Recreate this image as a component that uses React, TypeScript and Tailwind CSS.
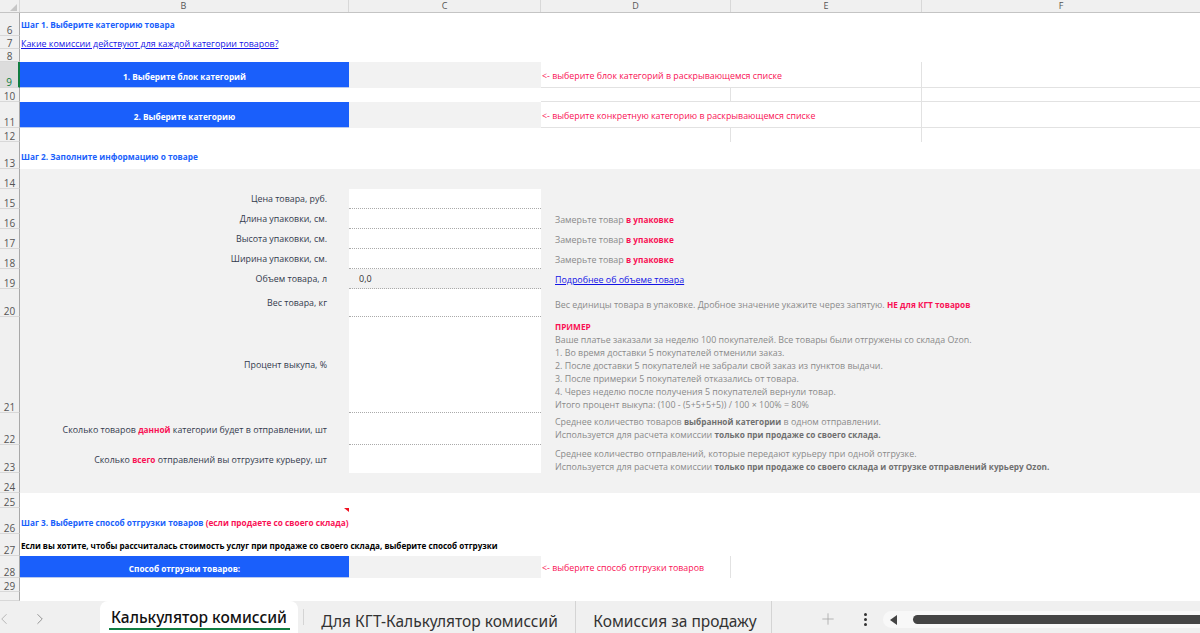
import type { ReactNode } from 'react';
import { ChevronLeft, ChevronRight, Plus } from 'lucide-react';

const FONT = 'font-["Open_Sans","Noto_Sans",sans-serif]';
const BLUE = 'text-[#1a5ffb]';
const PINK = 'text-[#f91155]';
const STRONG = 'font-bold text-[8.25px]';
const LINK = 'font-medium text-[8.9px] text-[#1414e6] underline whitespace-nowrap';

interface RowProps {
  n?: number;
  h: string;
  selected?: boolean;
  children?: ReactNode;
}

function Row({ n, h, selected, children }: RowProps) {
  return (
    <div className={`flex ${h}`}>
      <div
        className={`w-[20px] shrink-0 flex items-end justify-center border-b border-b-[#d8d8d8] border-r text-[10px] leading-[9px] ${
          selected
            ? 'bg-[#dcdcdc] border-r-2 border-r-[#107c41] text-[#107c41]'
            : 'bg-[#f0f0f0] border-r-[#a8a8a8] text-[#555]'
        }`}
      >
        {n}
      </div>
      {children}
    </div>
  );
}

function Blue({ children }: { children: ReactNode }) {
  return (
    <div className={`w-[329px] shrink-0 flex items-center justify-center pt-[3px] bg-[#1a5ffb] border-b border-[#b9c9ee] text-white ${STRONG}`}>
      {children}
    </div>
  );
}

function Hint({ children, className }: { children: ReactNode; className: string }) {
  return (
    <div className={`flex items-center pl-[1px] pt-[3px] text-[8.85px] whitespace-nowrap ${PINK} border-b border-[#e2e2e2] ${className}`}>
      {children}
    </div>
  );
}

function FormRow({
  n,
  h,
  label,
  input,
  last,
  children,
}: {
  n: number;
  h: string;
  label: ReactNode;
  input?: ReactNode;
  last?: boolean;
  children?: ReactNode;
}) {
  return (
    <Row n={n} h={h}>
      <div className="w-[329px] shrink-0 flex items-center justify-end pr-[22px] pt-[1px] text-[8.85px] text-[#333a4d] bg-[#f2f2f2]">
        <span>{label}</span>
      </div>
      <div
        className={`w-[192px] shrink-0 flex items-center pl-[10px] border-dotted border-[#aaa] text-[#333] ${
          input ? 'bg-[#f2f2f2]' : 'bg-white'
        } ${last ? '' : 'border-b'}`}
      >
        {input}
      </div>
      <div className="flex-1 flex flex-col justify-center pl-[14px] bg-[#f2f2f2] text-[#8a8a8a] text-[8.9px] leading-[13px] whitespace-nowrap">
        {children}
      </div>
    </Row>
  );
}

const measure = (
  <>
    Замерьте товар <b className={`${PINK} ${STRONG}`}>в упаковке</b>
  </>
);

function Tab({ children, active }: { children: ReactNode; active?: boolean }) {
  return active ? (
    <div className="h-full w-[198px] shrink-0 bg-white rounded-t-[8px] flex flex-col items-center pt-[5px]">
      <div className="w-[181px] pt-[1px] text-center text-[#111] text-[15.5px] leading-[20px] font-medium border-b-[2px] border-[#107c41] pb-[1px] whitespace-nowrap">
        {children}
      </div>
    </div>
  ) : (
    <div className="h-full flex items-end text-[#333] text-[15.5px] leading-[24px] whitespace-nowrap">{children}</div>
  );
}

export default function App() {
  return (
    <div className={`w-[1200px] h-[633px] overflow-hidden flex flex-col bg-white text-[9px] leading-[13px] ${FONT}`}>
      {/* column letters */}
      <div className="h-[13px] shrink-0 flex bg-[#f0f0f0] border-b border-[#c4c4c4] text-[9px] leading-[12px] text-[#555] text-center">
        <div className="w-[20px] shrink-0 flex justify-end items-end pr-[2px] pb-[1px] border-r border-[#d8d8d8]">
          <svg width="7" height="7" viewBox="0 0 7 7">
            <path d="M7 0V7H0Z" fill="#c6c6c6" />
          </svg>
        </div>
        <div className="w-[329px] shrink-0 border-r border-[#d8d8d8] pr-[1px]">B</div>
        <div className="w-[192px] shrink-0 border-r border-[#d8d8d8]">C</div>
        <div className="w-[190px] shrink-0 border-r border-[#d8d8d8]">D</div>
        <div className="w-[191px] shrink-0 border-r border-[#d8d8d8]">E</div>
        <div className="flex-1">F</div>
      </div>

      <div className="flex-1 min-h-0 flex flex-col">
        <Row n={6} h="h-[23px]">
          <div className={`pl-[1px] pb-[1px] flex items-center ${STRONG} ${BLUE}`}>Шаг 1. Выберите категорию товара</div>
        </Row>
        <Row n={7} h="h-[13px]">
          <div className={`pl-[1px] pt-[1px] ${LINK}`}>Какие комиссии действуют для каждой категории товаров?</div>
        </Row>
        <Row n={8} h="h-[13px]" />
        <Row n={9} h="h-[26px]" selected>
          <Blue>1. Выберите блок категорий</Blue>
          <div className="w-[192px] shrink-0 bg-[#f2f2f2]" />
          <Hint className="w-[381px] shrink-0 border-r">{'<- выберите блок категорий в раскрывающемся списке'}</Hint>
          <div className="flex-1 border-b border-[#e2e2e2]" />
        </Row>
        <Row n={10} h="h-[14px]">
          <div className="w-[521px] shrink-0" />
          <div className="w-[190px] shrink-0 border-r border-b border-[#e2e2e2]" />
          <div className="w-[191px] shrink-0 border-r border-b border-[#e2e2e2]" />
          <div className="flex-1 border-b border-[#e2e2e2]" />
        </Row>
        <Row n={11} h="h-[26px]">
          <Blue>2. Выберите категорию</Blue>
          <div className="w-[192px] shrink-0 bg-[#f2f2f2]" />
          <Hint className="w-[381px] shrink-0 border-r">{'<- выберите конкретную категорию в раскрывающемся списке'}</Hint>
          <div className="flex-1 border-b border-[#e2e2e2]" />
        </Row>
        <Row n={12} h="h-[14px]">
          <div className="w-[521px] shrink-0" />
          <div className="w-[190px] shrink-0 border-r border-[#e2e2e2]" />
          <div className="w-[191px] shrink-0 border-r border-[#e2e2e2]" />
        </Row>
        <Row n={13} h="h-[27px]">
          <div className={`pl-[1px] pt-[2px] flex items-center ${STRONG} ${BLUE}`}>Шаг 2. Заполните информацию о товаре</div>
        </Row>
        <Row n={14} h="h-[20px]">
          <div className="flex-1 bg-[#f2f2f2]" />
        </Row>

        <FormRow n={15} h="h-[20px]" label="Цена товара, руб." />
        <FormRow n={16} h="h-[20px]" label="Длина упаковки, см.">
          <div>{measure}</div>
        </FormRow>
        <FormRow n={17} h="h-[20px]" label="Высота упаковки, см.">
          <div>{measure}</div>
        </FormRow>
        <FormRow n={18} h="h-[20px]" label="Ширина упаковки, см.">
          <div>{measure}</div>
        </FormRow>
        <FormRow n={19} h="h-[20px]" label="Объем товара, л" input="0,0">
          <div className={LINK}>Подробнее об объеме товара</div>
        </FormRow>
        <FormRow n={20} h="h-[28px]" label="Вес товара, кг">
          <div className="pt-[2px]">
            Вес единицы товара в упаковке. Дробное значение укажите через запятую.{' '}
            <b className={`${PINK} ${STRONG}`}>НЕ для КГТ товаров</b>
          </div>
        </FormRow>
        <FormRow n={21} h="h-[96px]" label="Процент выкупа, %">
          <div className="pt-[1px]">
            <b className={`block ${PINK} ${STRONG}`}>ПРИМЕР</b>
            <div>Ваше платье заказали за неделю 100 покупателей. Все товары были отгружены со склада Ozon.</div>
            <div>1. Во время доставки 5 покупателей отменили заказ.</div>
            <div>2. После доставки 5 покупателей не забрали свой заказ из пунктов выдачи.</div>
            <div>3. После примерки 5 покупателей отказались от товара.</div>
            <div>4. Через неделю после получения 5 покупателей вернули товар.</div>
            <div>Итого процент выкупа: (100 - (5+5+5+5)) / 100 × 100% = 80%</div>
          </div>
        </FormRow>
        <FormRow
          n={22}
          h="h-[32px]"
          label={
            <>
              Сколько товаров <b className={`${PINK} ${STRONG}`}>данной</b> категории будет в отправлении, шт
            </>
          }
        >
          <div className="mb-[3px]">
            <div>
              Среднее количество товаров <b className={`text-[#6f6f6f] ${STRONG}`}>выбранной категории</b> в одном отправлении.
            </div>
            <div>
              Используется для расчета комиссии{' '}
              <b className={`text-[#6f6f6f] ${STRONG}`}>только при продаже со своего склада.</b>
            </div>
          </div>
        </FormRow>
        <FormRow
          n={23}
          h="h-[28px]"
          last
          label={
            <>
              Сколько <b className={`${PINK} ${STRONG}`}>всего</b> отправлений вы отгрузите курьеру, шт
            </>
          }
        >
          <div className="pt-[1px]">
            <div>Среднее количество отправлений, которые передают курьеру при одной отгрузке.</div>
            <div>
              Используется для расчета комиссии{' '}
              <b className={`text-[#6f6f6f] ${STRONG}`}>только при продаже со своего склада и отгрузке отправлений курьеру Ozon.</b>
            </div>
          </div>
        </FormRow>
        <Row n={24} h="h-[20px]">
          <div className="flex-1 bg-[#f2f2f2]" />
        </Row>
        <Row n={25} h="h-[15px]" />
        <Row n={26} h="h-[26px]">
          <div className={`relative w-[329px] shrink-0 flex items-center pl-[1px] pt-[2px] whitespace-nowrap ${STRONG}`}>
            <span className={BLUE}>Шаг 3. Выберите способ отгрузки товаров&nbsp;</span>
            <span className={PINK}>(если продаете со своего склада)</span>
            <svg className="absolute right-0 top-0" width="5" height="4" viewBox="0 0 5 4">
              <path d="M0 0H5V4Z" fill="#f01020" />
            </svg>
          </div>
        </Row>
        <Row n={27} h="h-[22px]">
          <div className="pl-[1px] pt-[1px] flex items-center whitespace-nowrap text-black font-bold text-[8.1px]">
            Если вы хотите, чтобы рассчиталась стоимость услуг при продаже со своего склада, выберите способ отгрузки
          </div>
        </Row>
        <Row n={28} h="h-[22px]">
          <Blue>Способ отгрузки товаров:</Blue>
          <div className="w-[192px] shrink-0 bg-[#f2f2f2]" />
          <div className={`w-[190px] shrink-0 flex items-center pl-[1px] pt-[3px] text-[8.85px] border-r border-[#e2e2e2] whitespace-nowrap ${PINK}`}>
            {'<- выберите способ отгрузки товаров'}
          </div>
        </Row>
        <Row n={29} h="h-[14px]" />
        <Row h="flex-1" />
      </div>

      {/* sheet tabs */}
      <div className="h-[32px] shrink-0 flex items-stretch bg-[#f0f0f0] font-['Noto_Sans',sans-serif]">
        <div className="w-[100px] shrink-0 flex items-center rounded-tr-[8px] text-[#8a8a8a] pt-[4px]">
          <ChevronLeft size={18} strokeWidth={1.2} className="ml-[-5px] text-[#b0b0b0]" />
          <ChevronRight size={18} strokeWidth={1.2} className="ml-[18px]" />
        </div>
        <Tab active>Калькулятор комиссий</Tab>
        <div className="flex-1 flex items-stretch bg-[#f0f0f0] rounded-tl-[8px] min-w-0">
          <div className="w-[6px] shrink-0 border-r border-[#d4d4d4] my-[8px]" />
          <div className="w-[272px] shrink-0 flex justify-center border-r border-[#d4d4d4]">
            <Tab>Для КГТ-Калькулятор комиссий</Tab>
          </div>
          <div className="w-[196px] shrink-0 flex justify-center pl-[3px] border-r border-[#d4d4d4]">
            <Tab>Комиссия за продажу</Tab>
          </div>
          <div className="w-[111px] shrink-0 flex items-center pt-[4px] pl-[47px] text-[#a0a0a0]">
            <Plus size={18} strokeWidth={1} />
            <div className="ml-[27px] flex flex-col gap-[2px]">
              <span className="w-[3px] h-[3px] rounded-full bg-[#333]" />
              <span className="w-[3px] h-[3px] rounded-full bg-[#333]" />
              <span className="w-[3px] h-[3px] rounded-full bg-[#333]" />
            </div>
          </div>
          <div className="flex-1 min-w-0 h-[17px] mt-[10px] flex items-center bg-[#f8f8f8] rounded-l-full pl-[7px]">
            <svg width="8" height="10" viewBox="0 0 8 10" className="shrink-0">
              <path d="M7 0V10L0 5Z" fill="#444" />
            </svg>
            <div className="flex-1 h-[9px] ml-[15px] mr-[-10px] bg-[#444] rounded-full" />
          </div>
        </div>
      </div>
    </div>
  );
}
